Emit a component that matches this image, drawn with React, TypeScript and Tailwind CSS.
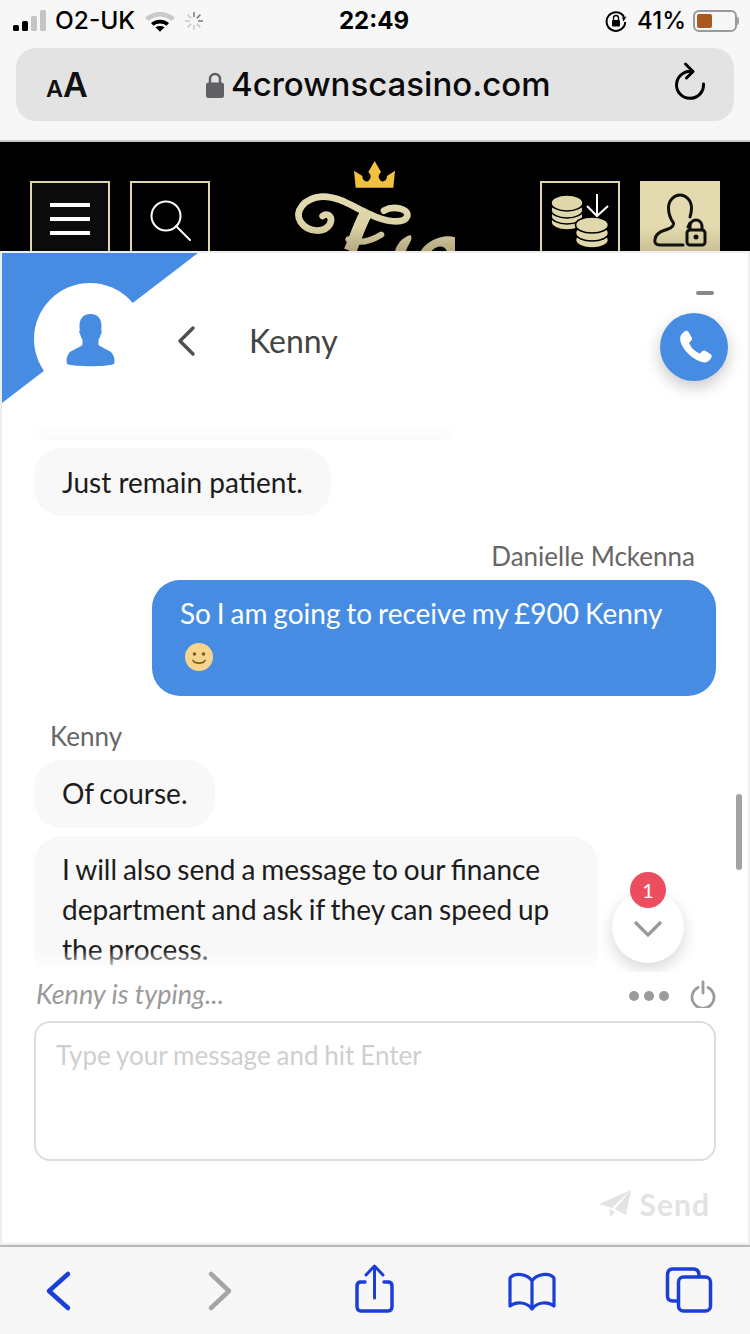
import React from "react";

const Gold = "#e0d7ad";

function Signal() {
  return (
    <svg width="34" height="22" viewBox="0 0 34 22" className="ml-[13px]">
      <rect x="0" y="15" width="6" height="6" rx="1.5" fill="#000" />
      <rect x="9" y="11" width="6" height="10" rx="1.5" fill="#000" />
      <rect x="18" y="6" width="6" height="15" rx="1.5" fill="#c4c4c4" />
      <rect x="27" y="0" width="6" height="21" rx="1.5" fill="#c4c4c4" />
    </svg>
  );
}

function Wifi() {
  return (
    <svg width="30" height="22" viewBox="0 0 30 22" className="ml-[10px]">
      <path d="M0 7.500C8.500 0 21.500 0 30 7.500L26.500 11C19.500 5 10.500 5 3.500 11Z" fill="#c9c9c9" />
      <path d="M6 13C11 8.500 19 8.500 24 13L21.500 15.800C17.500 12.800 12.500 12.800 8.500 15.800Z" fill="#000" />
      <path d="M10.500 17.300C13 15.500 17 15.500 19.500 17.300L15 21.800Z" fill="#000" />
    </svg>
  );
}

function Spinner() {
  const items = [0, 45, 90, 135, 180, 225, 270, 315];
  return (
    <svg width="20" height="20" viewBox="0 0 20 20" className="ml-[9px]">
      {items.map((a, i) => (
        <line
          key={a}
          x1="10"
          y1="1"
          x2="10"
          y2="6"
          stroke={i < 3 ? "#777" : "#c8c8c8"}
          strokeWidth="1.5"
          transform={`rotate(${a} 10 10)`}
        />
      ))}
    </svg>
  );
}

function RotationLock() {
  return (
    <svg width="22" height="22" viewBox="0 0 22 22">
      <path d="M19 7A9.3 9.3 0 1 0 20.2 12" fill="none" stroke="#000" strokeWidth="2" />
      <path d="M21.5 6.5L17 7.5L18.5 11.5Z" fill="#000" />
      <rect x="7" y="10" width="8" height="6.5" rx="1" fill="#000" />
      <path d="M8.5 10V8a2.5 2.5 0 0 1 5 0V10" fill="none" stroke="#000" strokeWidth="1.4" />
    </svg>
  );
}

function Battery() {
  return (
    <div className="flex items-center ml-[7px] mr-[11px]">
      <div className="w-[44px] h-[22px] rounded-[6px] border-2 border-[#9a9a9a] p-[2px]">
        <div className="w-[15px] h-full rounded-[2px] bg-[#a9581f]" />
      </div>
      <div className="w-[2px] h-[8px] bg-[#a5a5a5] rounded-r-sm" />
    </div>
  );
}

function Reload() {
  return (
    <svg width="32" height="38" viewBox="0 0 32 38" className="block mb-[8px] mr-[1px]">
      <path d="M18 9.500A13.500 13.500 0 1 0 29.500 22" fill="none" stroke="#000" strokeWidth="3" strokeLinecap="round" />
      <path d="M11.500 2L19 9.500L12.500 16" fill="none" stroke="#000" strokeWidth="3" strokeLinecap="round" strokeLinejoin="round" />
    </svg>
  );
}

function Lock() {
  return (
    <svg width="18" height="26" viewBox="0 0 18 26" className="block">
      <path d="M4 12V7a5 5 0 0 1 10 0V12" fill="none" stroke="#5f5f64" strokeWidth="2.400" />
      <rect x="0" y="10.500" width="18" height="15.500" rx="2.500" fill="#5f5f64" />
    </svg>
  );
}

function Coins() {
  const stack = (x: number, ys: number[], rx: number) =>
    ys.map((y) => (
      <ellipse key={`${x}-${y}`} cx={x} cy={y} rx={rx} ry={8} fill={Gold} stroke="#000" strokeWidth="1.600" />
    ));
  return (
    <svg width="78" height="68" viewBox="0 0 78 68" className="block">
      {stack(25, [39, 33, 27, 20], 16)}
      {stack(50, [57, 50, 42], 16.500)}
      <path d="M55 11V33M45 23L55 33L66 23" fill="none" stroke="#fff" strokeWidth="2" />
    </svg>
  );
}

function UserLock() {
  return (
    <svg width="80" height="70" viewBox="0 0 80 70" className="block">
      <path
        d="M43 64H20c-4 0-6-2-5-6 1-6 7-8 13-10 4-1.500 6-3 5.500-6-3-4-5-9-5-15 0-8 6-13 11.500-13s11.500 5 11.500 13c0 3-.5 6-1.500 9"
        fill="none"
        stroke="#111"
        strokeWidth="3"
        strokeLinecap="round"
      />
      <path d="M50 42l-2 4" stroke="#111" strokeWidth="3" strokeLinecap="round" />
      <rect x="47" y="49" width="18" height="15" rx="3" fill="none" stroke="#111" strokeWidth="3" />
      <path d="M50 49v-4a6 6 0 0 1 12 0v4" fill="none" stroke="#111" strokeWidth="3" />
      <circle cx="56" cy="56" r="2.500" fill="#111" />
    </svg>
  );
}

function Logo() {
  return (
    <div className="relative flex-1 h-[109px]">
      <svg width="190" height="101" viewBox="0 0 570 303" className="absolute left-[50px] top-[-31px] block">
        <defs>
          <linearGradient id="lg" x1="0" y1="120" x2="0" y2="303" gradientUnits="userSpaceOnUse">
            <stop offset="0" stopColor="#e5dcb5" />
            <stop offset="0.6" stopColor="#dcd2a6" />
            <stop offset="1" stopColor="#b3a880" />
          </linearGradient>
        </defs>
        <path
          d="M222 62L247 78C247 96 268 102 272 80C272 74 268 70 265 66L284 33L303 66C300 70 296 74 296 80C300 102 321 96 321 78L345 62L340 113H227Z"
          fill="#f1c23e"
        />
        <path
          d="M128 198C142 186 160 200 150 222C134 250 84 248 62 216C42 184 72 144 126 140C176 138 222 172 268 192C316 216 372 224 382 198C386 176 340 166 312 182"
          fill="none"
          stroke="url(#lg)"
          strokeWidth="20"
          strokeLinecap="round"
        />
        <path d="M262 185C246 205 232 250 210 303" fill="none" stroke="url(#lg)" strokeWidth="38" />
        <path d="M205 268C240 284 275 272 304 254" fill="none" stroke="url(#lg)" strokeWidth="18" strokeLinecap="round" />
        <path d="M345 303C350 285 365 262 392 255C400 270 385 280 378 303Z" fill="url(#lg)" />
        <path d="M422 303C440 272 490 250 525 262V303H500C495 285 470 285 455 303Z" fill="url(#lg)" />
      </svg>
    </div>
  );
}

function AvatarCorner() {
  return (
    <svg width="200" height="152" viewBox="0 0 200 152" className="absolute left-0 top-0">
      <path d="M0 0H196L0 150Z" fill="#468ce2" />
      <circle cx="88" cy="86" r="56" fill="#fff" />
      <path
        d="M88 61c-7 0-10.500 5-10.500 12 0 2 0 3 .500 4-1 0-1 3 0 4 .5 2 1.500 4 2.500 6v5c-3 3-12 5-14 9-2 3-2.500 6-1.500 10 7 3 40 3 47 0 1-4 .5-7-1.500-10-2-4-11-6-14-9v-5c1-2 2-4 2.500-6 1-1 1-4 0-4 .5-1 .5-2 .5-4 0-7-3.500-12-10.500-12z"
        fill="#468ce2"
      />
    </svg>
  );
}

function Smile() {
  return (
    <svg width="30" height="30" viewBox="0 0 30 30" className="block">
      <circle cx="15" cy="15" r="14" fill="#f6d48b" />
      <circle cx="10.500" cy="12" r="1.800" fill="#7a5a2a" />
      <circle cx="19.500" cy="12" r="1.800" fill="#7a5a2a" />
      <path d="M9 18.500C11 22 19 22 21 18.500" fill="none" stroke="#7a5a2a" strokeWidth="1.600" strokeLinecap="round" />
    </svg>
  );
}

function PaperPlane() {
  return (
    <svg width="33" height="28" viewBox="0 0 33 28" className="block">
      <path d="M0 14L32 0L13 18Z" fill="#e3e3e3" />
      <path d="M32 0L27 25L16 19Z" fill="#e3e3e3" />
      <path d="M11 19L16 22L11 27Z" fill="#e3e3e3" />
    </svg>
  );
}

function Toolbar() {
  const c = "#1a3fd6";
  return (
    <div className="h-[89px] bg-[#f7f7f7] border-t-2 border-[#b8b8b8] shrink-0">
      <svg width="750" height="87" viewBox="0 1247 750 87" className="block">
        <path d="M68 1274L49 1291L68 1308" fill="none" stroke={c} strokeWidth="4.500" strokeLinecap="round" strokeLinejoin="round" />
        <path d="M211 1274L229 1291L211 1308" fill="none" stroke="#a5a5a5" strokeWidth="4.500" strokeLinecap="round" strokeLinejoin="round" />
        <path d="M365 1282H361C358 1282 357 1284 357 1286V1306C357 1309 358 1311 361 1311H388C391 1311 392 1309 392 1306V1286C392 1284 391 1282 388 1282H384" fill="none" stroke={c} strokeWidth="3.500" strokeLinecap="round" />
        <path d="M374.500 1298V1267M366 1275L374.500 1266L383 1275" fill="none" stroke={c} strokeWidth="3" strokeLinecap="round" strokeLinejoin="round" />
        <path d="M532 1281C528 1274 515 1272 510 1278V1306C516 1301 527 1302 532 1309C537 1302 548 1301 554 1306V1278C549 1272 536 1274 532 1281V1309" fill="none" stroke={c} strokeWidth="3.200" strokeLinejoin="round" />
        <rect x="678.500" y="1277" width="32" height="34" rx="5" fill="none" stroke={c} strokeWidth="3.500" />
        <path d="M677 1301H673C669 1301 667.500 1299 667.500 1296V1275C667.500 1271 669 1269 673 1269H693C697 1269 699 1271 699 1275V1277" fill="none" stroke={c} strokeWidth="3.500" />
      </svg>
    </div>
  );
}

export default function App() {
  return (
    <div className="w-[750px] h-[1334px] overflow-hidden bg-white flex flex-col font-['Lato',sans-serif]">
      {/* Safari top */}
      <div className="h-[142px] shrink-0 bg-[#f7f7f7] border-b-2 border-[#c9c9c9] font-['Inter',sans-serif]">
        <div className="h-[48px] pb-[7px] relative flex items-center text-black">
          <Signal />
          <span className="ml-[8px] text-[24.500px] font-medium leading-none">O2-UK</span>
          <Wifi />
          <Spinner />
          <span className="absolute left-[339px] top-[8px] text-[24px] font-bold leading-[25px]">22:49</span>
          <div className="ml-auto flex items-center">
            <RotationLock />
            <span className="ml-[10px] text-[24px] font-medium leading-none">41%</span>
            <Battery />
          </div>
        </div>
        <div className="mx-[16px] h-[73px] rounded-[20px] bg-[#e3e3e3] flex items-center pl-[30px] pr-[27px]">
          <span className="font-semibold leading-none flex items-baseline text-[#111] w-[160px]">
            <span className="text-[23.500px]">A</span>
            <span className="text-[34px]">A</span>
          </span>
          <Lock />
          <span className="ml-[7px] text-[33px] font-medium text-[#0a0a0a] leading-none">4crownscasino.com</span>
          <span className="ml-auto">
            <Reload />
          </span>
        </div>
      </div>

      {/* Site header */}
      <div className="h-[109px] shrink-0 bg-black overflow-hidden flex px-[30px] pt-[39px] gap-[20px]">
        <div className="w-[80px] h-[90px] border-2 border-[#e0d7ad] bg-[#0b0b0b] flex flex-col items-center gap-[10px] pt-[20px]">
          <div className="w-[40px] h-[4px] bg-white" />
          <div className="w-[40px] h-[4px] bg-white" />
          <div className="w-[40px] h-[4px] bg-white" />
        </div>
        <div className="w-[80px] h-[90px] border-2 border-[#e0d7ad] pt-[16px] pl-[17px]">
          <svg width="44" height="44" viewBox="0 0 44 44" className="block">
            <circle cx="17" cy="17" r="14.500" fill="none" stroke="#fff" strokeWidth="2" />
            <path d="M27 27L41 41" stroke="#fff" strokeWidth="2" strokeLinecap="round" />
          </svg>
        </div>
        <Logo />
        <div className="w-[80px] h-[90px] border-2 border-[#e0d7ad] overflow-hidden">
          <Coins />
        </div>
        <div className="w-[80px] h-[90px] bg-gradient-to-b from-[#e3daaf] via-[#e3daaf] to-[#b8ad84] overflow-hidden">
          <UserLock />
        </div>
      </div>

      {/* Chat panel */}
      <div className="flex-1 min-h-0 border-t-2 border-x-2 border-b-2 border-[#eeeeee] bg-white flex flex-col relative">
        <div className="relative h-[172px] shrink-0">
          <AvatarCorner />
          <div className="absolute left-[174px] top-[70px] flex items-center">
            <svg width="22" height="36" viewBox="0 0 22 36" className="block">
              <path d="M17 5L4 18L17 31" fill="none" stroke="#505050" strokeWidth="3.500" strokeLinecap="round" strokeLinejoin="round" />
            </svg>
            <span className="ml-[51px] text-[32px] leading-[36px] text-[#444]">Kenny</span>
          </div>
          <div className="absolute left-[694px] top-[38px] w-[18px] h-[4px] rounded-full bg-[#888]" />
          <div className="absolute left-[658px] top-[60px] w-[68px] h-[68px] rounded-full bg-[#468ce2] flex items-center justify-center shadow-[0_6px_16px_rgba(0,0,0,0.22)]">
            <svg width="40" height="40" viewBox="0 0 24 24" className="block">
              <path
                d="M6.600 2.500c.7-.4 1.500-.3 2 .4l2 3.200c.4.7.3 1.400-.2 2l-1.300 1.400c.8 2.600 3.600 5.500 6.400 6.400l1.400-1.300c.6-.5 1.300-.6 2-.2l3.100 2c.7.5.8 1.300.4 2-1 1.800-3 3.100-5 2.800C11.300 20 4 12.700 3.700 7.400c-.2-2 1.100-3.900 2.900-4.900z"
                fill="#fff"
              />
            </svg>
          </div>
        </div>

        {/* Messages */}
        <div className="relative h-[547px] shrink-0 overflow-hidden">
          <div className="flex flex-col px-[32px] text-[28px] text-[#1c1c1c]">
            <div className="w-[421px] h-[15px] rounded-b-[24px] bg-gradient-to-b from-white to-[#fafafa] mb-[8px]" />
            <div className="self-start h-[68px] rounded-[28px] bg-[#f8f8f8] px-[28px] pb-[1px] flex items-center">Just remain patient.</div>
            <div className="self-end mr-[21px] mt-[24px] mb-[8px] text-[26px] leading-[32px] text-[#666]">Danielle Mckenna</div>
            <div className="self-end w-[564px] h-[116px] rounded-[28px] bg-[#468ce2] text-white px-[28px] pt-[11px] leading-[44px] [word-spacing:-1.300px]">
              <div>So I am going to receive my £900 Kenny</div>
              <div className="pt-[7px] pl-[4px]">
                <Smile />
              </div>
            </div>
            <div className="ml-[16px] mt-[24px] mb-[8px] text-[26px] leading-[32px] text-[#666]">Kenny</div>
            <div className="self-start w-[181px] h-[68px] rounded-[28px] bg-[#f8f8f8] pl-[28px] pb-[2px] flex items-center whitespace-nowrap [word-spacing:-1.500px]">Of course.</div>
            <div className="self-start w-[564px] mt-[8px] rounded-[28px] bg-[#f8f8f8] px-[28px] pt-[13px] pb-[15px] leading-[40px] [word-spacing:-1.300px]">
              I will also send a message to our finance department and ask if they can speed up the process.
            </div>
          </div>
          <div className="absolute left-[32px] bottom-0 w-[564px] h-[22px] bg-gradient-to-b from-transparent to-white" />
          <div className="absolute left-[734px] top-[369px] w-[6px] h-[76px] rounded-full bg-[#a2a2a2]" />
          <div className="absolute left-[610px] top-[466px] w-[72px] h-[72px] rounded-full bg-white flex items-center justify-center shadow-[0_6px_16px_rgba(0,0,0,0.16)] pt-[4px]">
            <svg width="30" height="20" viewBox="0 0 30 20" className="block">
              <path d="M2 3L15 16L28 3" fill="none" stroke="#999" strokeWidth="3.200" />
            </svg>
          </div>
          <div className="absolute left-[628px] top-[447px] w-[36px] h-[36px] rounded-full bg-[#ec4d5f] text-white text-[20px] flex items-center justify-center">
            1
          </div>
        </div>

        {/* Typing row */}
        <div className="h-[49px] shrink-0 flex items-center pl-[34px] pr-[32px]">
          <span className="italic text-[27px] leading-[32px] text-[#9a9a9a] mt-[-6px]">Kenny is typing...</span>
          <div className="ml-auto flex items-center gap-[5px] pb-[2px]">
            <span className="w-[10px] h-[10px] rounded-full bg-[#9b9b9b]" />
            <span className="w-[10px] h-[10px] rounded-full bg-[#9b9b9b]" />
            <span className="w-[10px] h-[10px] rounded-full bg-[#9b9b9b]" />
          </div>
          <svg width="26" height="28" viewBox="0 0 26 28" className="ml-[21px] block mt-[-6px]">
            <path d="M8 7.500A11 11 0 1 0 18 7.500" fill="none" stroke="#9b9b9b" strokeWidth="2.800" strokeLinecap="round" />
            <path d="M13 2V13" stroke="#9b9b9b" strokeWidth="2.800" strokeLinecap="round" />
          </svg>
        </div>

        {/* Input */}
        <div className="mx-[32px] h-[140px] shrink-0 rounded-[16px] border-2 border-[#dddddd] pl-[20px] pt-[16px] text-[26px] leading-[32px] text-[#cfcfcf] [word-spacing:-0.800px]">
          Type your message and hit Enter
        </div>

        {/* Send */}
        <div className="flex items-center justify-end gap-[8px] pr-[38px] pt-[26px]">
          <PaperPlane />
          <span className="text-[30px] leading-[34px] font-bold text-[#e3e3e3] tracking-[1px]">Send</span>
        </div>
      </div>

      <Toolbar />
    </div>
  );
}
